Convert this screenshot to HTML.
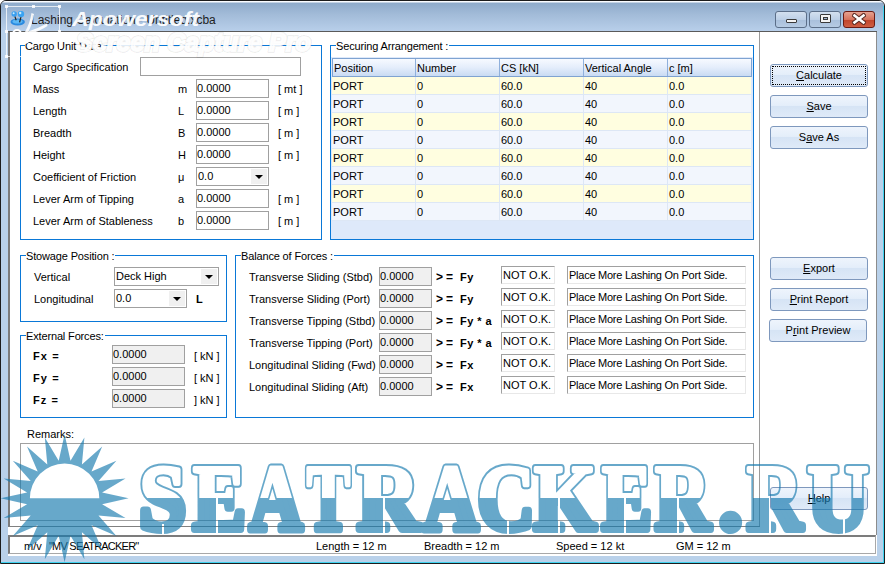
<!DOCTYPE html>
<html><head><meta charset="utf-8">
<style>
*{margin:0;padding:0;box-sizing:border-box}
html,body{width:885px;height:564px;overflow:hidden;background:#fff}
body{position:relative;font-family:"Liberation Sans",sans-serif;font-size:11px;color:#000}
div,span{position:absolute}
.t{white-space:nowrap;line-height:13px;font-size:11px}
.b{font-weight:bold;letter-spacing:0.45px}
.tb{border:1px solid #a0a0a0;background:#fff;height:19px;width:73px}
.tb span{left:0px;top:2px;line-height:13px;white-space:nowrap}
.g{background:#f0f0f0}
.gb{border:1px solid #0a78d7}
.gl{background:#fff;line-height:13px;white-space:nowrap;padding:0 1px 0 0;letter-spacing:-0.15px}
.sk{border-top:1px solid #a0a0a0;border-left:1px solid #a0a0a0;border-right:1px solid #e8e8e8;border-bottom:1px solid #e8e8e8;background:#fff;height:18px}
.sk span{left:1px;top:2px;line-height:13px;white-space:nowrap}
.btn{width:98px;height:23px;border:1px solid #7e98bd;border-radius:3px;background:linear-gradient(#eef4fc 0%,#e4eefa 45%,#d6e4f5 50%,#dfeaf8 100%);text-align:center;line-height:20px;font-size:11px}
.btn u{text-decoration:underline}
.cb{border:1px solid #a0a0a0;background:#fff;height:19px}
.cb span{left:1px;top:2px;line-height:13px}
.cb i{position:absolute;right:1px;top:1px;width:16px;height:15px;background:#f0f0f0}
.cb i:after{content:"";position:absolute;left:4px;top:6px;border-left:4px solid transparent;border-right:4px solid transparent;border-top:4px solid #000}
.row{height:18px;width:419px;left:0}
.row span{top:4px;line-height:13px}
.y{background:#fffee0}
.lb{background:#f2f6fd}
</style></head><body>
<!-- window frame -->
<div style="left:0;top:0;width:885px;height:564px;background:#b9d1ea;border:1px solid #1c1c1c;border-radius:6px 6px 0 0"></div>
<div style="left:1px;top:1px;width:883px;height:30px;border-radius:5px 5px 0 0;background:linear-gradient(#fafcff 0px,#fafcff 1px,#8fabcb 2px,#a3bcd9 14px,#b8cfea 30px)"></div>
<div style="left:883px;top:6px;width:1px;height:557px;background:#3fd3f0"></div>
<div style="left:1px;top:562px;width:883px;height:1px;background:#3fd3f0"></div>
<!-- title -->
<svg style="position:absolute;left:10px;top:11px" width="17" height="16" viewBox="0 0 17 16">
<ellipse cx="7.7" cy="11" rx="7.2" ry="3.4" fill="#2a8ae0"/>
<ellipse cx="7.5" cy="10.6" rx="5" ry="2" fill="#5cb8f5"/>
<line x1="4.8" y1="5.2" x2="6.2" y2="9.2" stroke="#222" stroke-width="1.1"/>
<line x1="11" y1="5.6" x2="9.6" y2="11.4" stroke="#222" stroke-width="1.2"/>
<circle cx="4.2" cy="3" r="2.7" fill="#3a9ff0"/><circle cx="11" cy="3" r="3.2" fill="#3aa3f2"/>
<circle cx="3.6" cy="2.2" r="1" fill="#c8ecff"/><circle cx="10.2" cy="2" r="1.2" fill="#c8ecff"/>
</svg>
<div class="t" style="left:31px;top:13px;font-size:12px;line-height:14px;color:#1e1e1e">Lashing Calculation - Untitled.xcba</div>
<!-- caption buttons -->
<div style="left:775px;top:11px;width:32px;height:17px;border:1px solid #5b6e88;border-radius:3px;background:linear-gradient(#d3e0ef 0%,#bccfe6 50%,#a8bfdb 51%,#b6cbe3 100%)"><span style="left:10px;top:7px;width:11px;height:4px;background:#f4f4f4;border:1px solid #3a3a3a;border-radius:1px"></span></div>
<div style="left:809px;top:11px;width:32px;height:17px;border:1px solid #5b6e88;border-radius:3px;background:linear-gradient(#d3e0ef 0%,#bccfe6 50%,#a8bfdb 51%,#b6cbe3 100%)"><span style="left:10px;top:2px;width:11px;height:9px;background:#f4f4f4;border:1px solid #3a3a3a;border-radius:1px"><span style="left:2px;top:2px;width:5px;height:3px;border:1px solid #3a3a3a;background:#9fb4cf"></span></span></div>
<div style="left:843px;top:11px;width:32px;height:17px;border:1px solid #6a1a12;border-radius:3px;background:linear-gradient(#e6a291 0%,#d6735d 50%,#c0432a 51%,#cf5e42 100%)">
<svg style="position:absolute;left:8px;top:1px" width="14" height="12" viewBox="0 0 14 12"><path d="M2.5 2.5 L11.5 9.5 M11.5 2.5 L2.5 9.5" stroke="#5a2a22" stroke-width="4.6" stroke-linecap="square" fill="none"/><path d="M2.5 2.5 L11.5 9.5 M11.5 2.5 L2.5 9.5" stroke="#fff" stroke-width="2.6" stroke-linecap="square"/></svg></div>

<!-- client -->
<div style="left:8px;top:31px;width:869px;height:525px;background:#fff;border-top:1px solid #5a5a5a"></div>
<div style="left:8px;top:32px;width:2px;height:495px;background:#7c7c7c"></div>
<div style="left:876px;top:32px;width:1px;height:503px;background:#8c8c8c"></div>
<div style="left:759px;top:32px;width:1px;height:495px;background:#9a9a9a"></div>
<div style="left:8px;top:526px;width:752px;height:1px;background:#808080"></div>

<!-- Cargo Unit Data -->
<div class="gb" style="left:20px;top:45px;width:302px;height:195px"></div>
<div class="t gl" style="left:25px;top:40px">Cargo Unit Data</div>
<div class="t" style="left:33px;top:61px">Cargo Specification</div>
<div class="tb" style="left:140px;top:57px;width:161px"></div>
<div class="t" style="left:33px;top:83px">Mass</div><div class="t" style="left:178px;top:83px">m</div>
<div class="tb" style="left:196px;top:79px"><span>0.0000</span></div><div class="t" style="left:278px;top:83px">[ mt ]</div>
<div class="t" style="left:33px;top:105px">Length</div><div class="t" style="left:178px;top:105px">L</div>
<div class="tb" style="left:196px;top:101px"><span>0.0000</span></div><div class="t" style="left:278px;top:105px">[ m ]</div>
<div class="t" style="left:33px;top:127px">Breadth</div><div class="t" style="left:178px;top:127px">B</div>
<div class="tb" style="left:196px;top:123px"><span>0.0000</span></div><div class="t" style="left:278px;top:127px">[ m ]</div>
<div class="t" style="left:33px;top:149px">Height</div><div class="t" style="left:178px;top:149px">H</div>
<div class="tb" style="left:196px;top:145px"><span>0.0000</span></div><div class="t" style="left:278px;top:149px">[ m ]</div>
<div class="t" style="left:33px;top:171px">Coefficient of Friction</div><div class="t" style="left:178px;top:171px">μ</div>
<div class="cb" style="left:196px;top:167px;width:73px"><span>0.0</span><i></i></div>
<div class="t" style="left:33px;top:193px">Lever Arm of Tipping</div><div class="t" style="left:178px;top:193px">a</div>
<div class="tb" style="left:196px;top:189px"><span>0.0000</span></div><div class="t" style="left:278px;top:193px">[ m ]</div>
<div class="t" style="left:33px;top:215px">Lever Arm of Stableness</div><div class="t" style="left:178px;top:215px">b</div>
<div class="tb" style="left:196px;top:211px"><span>0.0000</span></div><div class="t" style="left:278px;top:215px">[ m ]</div>

<!-- Securing Arrangement -->
<div class="gb" style="left:330px;top:45px;width:424px;height:195px"></div>
<div class="t gl" style="left:336px;top:40px">Securing Arrangement :</div>
<div style="left:331px;top:57px;width:422px;height:182px;background:#dee9fa">
 <div style="left:1px;top:1px;width:420px;height:19px;border:1px solid #7fa3d1;background:linear-gradient(#f7faff 0%,#e4edfb 50%,#c9dbf3 100%)">
  <span class="t" style="left:1px;top:3px">Position</span>
  <span style="left:82px;top:0;width:1px;height:17px;background:#8fb0dc"></span>
  <span class="t" style="left:84px;top:3px">Number</span>
  <span style="left:166px;top:0;width:1px;height:17px;background:#8fb0dc"></span>
  <span class="t" style="left:168px;top:3px">CS [kN]</span>
  <span style="left:250px;top:0;width:1px;height:17px;background:#8fb0dc"></span>
  <span class="t" style="left:252px;top:3px">Vertical Angle</span>
  <span style="left:334px;top:0;width:1px;height:17px;background:#8fb0dc"></span>
  <span class="t" style="left:336px;top:3px">c [m]</span>
 </div>
 <div style="left:1px;top:20px;width:420px;height:144px" id="rows"><div class="row y" style="top:0px;border-bottom:1px solid #dde7f5"><span class="t" style="left:1px;top:3px">PORT</span><span class="t" style="left:85px;top:3px">0</span><span class="t" style="left:169px;top:3px">60.0</span><span class="t" style="left:253px;top:3px">40</span><span class="t" style="left:337px;top:3px">0.0</span><span style="left:83px;top:0;width:1px;height:17px;background:#dde7f5"></span><span style="left:167px;top:0;width:1px;height:17px;background:#dde7f5"></span><span style="left:251px;top:0;width:1px;height:17px;background:#dde7f5"></span><span style="left:335px;top:0;width:1px;height:17px;background:#dde7f5"></span></div><div class="row lb" style="top:18px;border-bottom:1px solid #dde7f5"><span class="t" style="left:1px;top:3px">PORT</span><span class="t" style="left:85px;top:3px">0</span><span class="t" style="left:169px;top:3px">60.0</span><span class="t" style="left:253px;top:3px">40</span><span class="t" style="left:337px;top:3px">0.0</span><span style="left:83px;top:0;width:1px;height:17px;background:#dde7f5"></span><span style="left:167px;top:0;width:1px;height:17px;background:#dde7f5"></span><span style="left:251px;top:0;width:1px;height:17px;background:#dde7f5"></span><span style="left:335px;top:0;width:1px;height:17px;background:#dde7f5"></span></div><div class="row y" style="top:36px;border-bottom:1px solid #dde7f5"><span class="t" style="left:1px;top:3px">PORT</span><span class="t" style="left:85px;top:3px">0</span><span class="t" style="left:169px;top:3px">60.0</span><span class="t" style="left:253px;top:3px">40</span><span class="t" style="left:337px;top:3px">0.0</span><span style="left:83px;top:0;width:1px;height:17px;background:#dde7f5"></span><span style="left:167px;top:0;width:1px;height:17px;background:#dde7f5"></span><span style="left:251px;top:0;width:1px;height:17px;background:#dde7f5"></span><span style="left:335px;top:0;width:1px;height:17px;background:#dde7f5"></span></div><div class="row lb" style="top:54px;border-bottom:1px solid #dde7f5"><span class="t" style="left:1px;top:3px">PORT</span><span class="t" style="left:85px;top:3px">0</span><span class="t" style="left:169px;top:3px">60.0</span><span class="t" style="left:253px;top:3px">40</span><span class="t" style="left:337px;top:3px">0.0</span><span style="left:83px;top:0;width:1px;height:17px;background:#dde7f5"></span><span style="left:167px;top:0;width:1px;height:17px;background:#dde7f5"></span><span style="left:251px;top:0;width:1px;height:17px;background:#dde7f5"></span><span style="left:335px;top:0;width:1px;height:17px;background:#dde7f5"></span></div><div class="row y" style="top:72px;border-bottom:1px solid #dde7f5"><span class="t" style="left:1px;top:3px">PORT</span><span class="t" style="left:85px;top:3px">0</span><span class="t" style="left:169px;top:3px">60.0</span><span class="t" style="left:253px;top:3px">40</span><span class="t" style="left:337px;top:3px">0.0</span><span style="left:83px;top:0;width:1px;height:17px;background:#dde7f5"></span><span style="left:167px;top:0;width:1px;height:17px;background:#dde7f5"></span><span style="left:251px;top:0;width:1px;height:17px;background:#dde7f5"></span><span style="left:335px;top:0;width:1px;height:17px;background:#dde7f5"></span></div><div class="row lb" style="top:90px;border-bottom:1px solid #dde7f5"><span class="t" style="left:1px;top:3px">PORT</span><span class="t" style="left:85px;top:3px">0</span><span class="t" style="left:169px;top:3px">60.0</span><span class="t" style="left:253px;top:3px">40</span><span class="t" style="left:337px;top:3px">0.0</span><span style="left:83px;top:0;width:1px;height:17px;background:#dde7f5"></span><span style="left:167px;top:0;width:1px;height:17px;background:#dde7f5"></span><span style="left:251px;top:0;width:1px;height:17px;background:#dde7f5"></span><span style="left:335px;top:0;width:1px;height:17px;background:#dde7f5"></span></div><div class="row y" style="top:108px;border-bottom:1px solid #dde7f5"><span class="t" style="left:1px;top:3px">PORT</span><span class="t" style="left:85px;top:3px">0</span><span class="t" style="left:169px;top:3px">60.0</span><span class="t" style="left:253px;top:3px">40</span><span class="t" style="left:337px;top:3px">0.0</span><span style="left:83px;top:0;width:1px;height:17px;background:#dde7f5"></span><span style="left:167px;top:0;width:1px;height:17px;background:#dde7f5"></span><span style="left:251px;top:0;width:1px;height:17px;background:#dde7f5"></span><span style="left:335px;top:0;width:1px;height:17px;background:#dde7f5"></span></div><div class="row lb" style="top:126px;border-bottom:1px solid #dde7f5"><span class="t" style="left:1px;top:3px">PORT</span><span class="t" style="left:85px;top:3px">0</span><span class="t" style="left:169px;top:3px">60.0</span><span class="t" style="left:253px;top:3px">40</span><span class="t" style="left:337px;top:3px">0.0</span><span style="left:83px;top:0;width:1px;height:17px;background:#dde7f5"></span><span style="left:167px;top:0;width:1px;height:17px;background:#dde7f5"></span><span style="left:251px;top:0;width:1px;height:17px;background:#dde7f5"></span><span style="left:335px;top:0;width:1px;height:17px;background:#dde7f5"></span></div></div>
</div>

<!-- right buttons -->
<div class="btn" style="left:770px;top:64px"><span style="left:1px;top:1px;right:1px;bottom:1px;border:1px dotted #000"></span><u>C</u>alculate</div>
<div class="btn" style="left:770px;top:95px"><u>S</u>ave</div>
<div class="btn" style="left:770px;top:126px">S<u>a</u>ve As</div>
<div class="btn" style="left:770px;top:257px"><u>E</u>xport</div>
<div class="btn" style="left:770px;top:288px"><u>P</u>rint Report</div>
<div class="btn" style="left:769px;top:319px">P<u>r</u>int Preview</div>
<div class="btn" style="left:770px;top:487px"><u>H</u>elp</div>

<!-- Stowage -->
<div class="gb" style="left:20px;top:255px;width:207px;height:67px"></div>
<div class="t gl" style="left:26px;top:250px">Stowage Position :</div>
<div class="t" style="left:34px;top:271px">Vertical</div>
<div class="cb" style="left:114px;top:267px;width:105px"><span>Deck High</span><i></i></div>
<div class="t" style="left:34px;top:293px">Longitudinal</div>
<div class="cb" style="left:114px;top:289px;width:73px"><span>0.0</span><i></i></div>
<div class="t b" style="left:196px;top:293px">L</div>

<!-- External Forces -->
<div class="gb" style="left:20px;top:335px;width:207px;height:83px"></div>
<div class="t gl" style="left:26px;top:330px">External Forces:</div>
<div class="t b" style="left:33px;top:350px;letter-spacing:1.1px">Fx =</div>
<div class="tb g" style="left:112px;top:345px"><span>0.0000</span></div><div class="t" style="left:194px;top:350px">[ kN ]</div>
<div class="t b" style="left:33px;top:372px;letter-spacing:1.1px">Fy =</div>
<div class="tb g" style="left:112px;top:367px"><span>0.0000</span></div><div class="t" style="left:194px;top:372px">[ kN ]</div>
<div class="t b" style="left:33px;top:394px;letter-spacing:1.1px">Fz =</div>
<div class="tb g" style="left:112px;top:389px"><span>0.0000</span></div><div class="t" style="left:194px;top:394px">] kN ]</div>

<!-- Balance of Forces -->
<div class="gb" style="left:235px;top:255px;width:519px;height:163px"></div>
<div class="t gl" style="left:241px;top:250px">Balance of Forces :</div>
<div class="t" style="left:249px;top:271px">Transverse Sliding (Stbd)</div><div class="tb g" style="left:379px;top:267px;width:53px"><span>0.0000</span></div><div class="t b" style="left:436px;top:271px;letter-spacing:3px;font-size:12px">&gt;=</div><div class="t b" style="left:460px;top:271px">Fy</div><div class="sk" style="left:501px;top:266px;width:54px"><span>NOT O.K.</span></div><div class="sk" style="left:567px;top:266px;width:179px"><span style="letter-spacing:-0.25px">Place More Lashing On Port Side.</span></div><div class="t" style="left:249px;top:293px">Transverse Sliding (Port)</div><div class="tb g" style="left:379px;top:289px;width:53px"><span>0.0000</span></div><div class="t b" style="left:436px;top:293px;letter-spacing:3px;font-size:12px">&gt;=</div><div class="t b" style="left:460px;top:293px">Fy</div><div class="sk" style="left:501px;top:288px;width:54px"><span>NOT O.K.</span></div><div class="sk" style="left:567px;top:288px;width:179px"><span style="letter-spacing:-0.25px">Place More Lashing On Port Side.</span></div><div class="t" style="left:249px;top:315px">Transverse Tipping (Stbd)</div><div class="tb g" style="left:379px;top:311px;width:53px"><span>0.0000</span></div><div class="t b" style="left:436px;top:315px;letter-spacing:3px;font-size:12px">&gt;=</div><div class="t b" style="left:460px;top:315px">Fy * a</div><div class="sk" style="left:501px;top:310px;width:54px"><span>NOT O.K.</span></div><div class="sk" style="left:567px;top:310px;width:179px"><span style="letter-spacing:-0.25px">Place More Lashing On Port Side.</span></div><div class="t" style="left:249px;top:337px">Transverse Tipping (Port)</div><div class="tb g" style="left:379px;top:333px;width:53px"><span>0.0000</span></div><div class="t b" style="left:436px;top:337px;letter-spacing:3px;font-size:12px">&gt;=</div><div class="t b" style="left:460px;top:337px">Fy * a</div><div class="sk" style="left:501px;top:332px;width:54px"><span>NOT O.K.</span></div><div class="sk" style="left:567px;top:332px;width:179px"><span style="letter-spacing:-0.25px">Place More Lashing On Port Side.</span></div><div class="t" style="left:249px;top:359px">Longitudinal Sliding (Fwd)</div><div class="tb g" style="left:379px;top:355px;width:53px"><span>0.0000</span></div><div class="t b" style="left:436px;top:359px;letter-spacing:3px;font-size:12px">&gt;=</div><div class="t b" style="left:460px;top:359px">Fx</div><div class="sk" style="left:501px;top:354px;width:54px"><span>NOT O.K.</span></div><div class="sk" style="left:567px;top:354px;width:179px"><span style="letter-spacing:-0.25px">Place More Lashing On Port Side.</span></div><div class="t" style="left:249px;top:381px">Longitudinal Sliding (Aft)</div><div class="tb g" style="left:379px;top:377px;width:53px"><span>0.0000</span></div><div class="t b" style="left:436px;top:381px;letter-spacing:3px;font-size:12px">&gt;=</div><div class="t b" style="left:460px;top:381px">Fx</div><div class="sk" style="left:501px;top:376px;width:54px"><span>NOT O.K.</span></div><div class="sk" style="left:567px;top:376px;width:179px"><span style="letter-spacing:-0.25px">Place More Lashing On Port Side.</span></div>

<!-- Remarks -->
<div class="t" style="left:27px;top:428px">Remarks:</div>
<div style="left:20px;top:443px;width:734px;height:78px;border:1px solid #a0a0a0"></div>

<!-- status bar -->
<div style="left:8px;top:535px;width:868px;height:19px;border-top:2px solid #7c7c7c;border-left:2px solid #7c7c7c;border-right:1px solid #a8a8a8;border-bottom:1px solid #a8a8a8;background:#fff"></div>
<div class="t" style="left:24px;top:540px">m/v</div>
<div class="t" style="left:49px;top:540px;letter-spacing:-0.78px">"MV SEATRACKER"</div>
<div class="t" style="left:316px;top:540px">Length = 12 m</div>
<div class="t" style="left:424px;top:540px">Breadth = 12 m</div>
<div class="t" style="left:556px;top:540px">Speed = 12 kt</div>
<div class="t" style="left:676px;top:540px">GM = 12 m</div>

<!-- watermark -->
<svg style="position:absolute;left:0;top:0" width="885" height="564">
<defs>
<clipPath id="up"><rect x="0" y="0" width="885" height="498"/></clipPath>
<clipPath id="dn"><rect x="0" y="498" width="885" height="70"/></clipPath>
<mask id="ring" maskUnits="userSpaceOnUse" x="0" y="0" width="885" height="564"><g font-family="Liberation Serif" font-weight="bold" font-size="92.2"><text transform="translate(139.19,528.8) scale(0.9125,1)" fill="#fff" stroke="#fff" stroke-width="8.0" stroke-linejoin="round">S</text><text transform="translate(193.08,528.8) scale(0.8553,1)" fill="#fff" stroke="#fff" stroke-width="8.0" stroke-linejoin="round">E</text><text transform="translate(249.45,528.8) scale(0.7955,1)" fill="#fff" stroke="#fff" stroke-width="8.0" stroke-linejoin="round">A</text><text transform="translate(306.78,528.8) scale(0.7063,1)" fill="#fff" stroke="#fff" stroke-width="8.0" stroke-linejoin="round">T</text><text transform="translate(357.28,528.8) scale(0.9357,1)" fill="#fff" stroke="#fff" stroke-width="8.0" stroke-linejoin="round">R</text><text transform="translate(423.53,528.8) scale(0.8229,1)" fill="#fff" stroke="#fff" stroke-width="8.0" stroke-linejoin="round">A</text><text transform="translate(477.56,528.8) scale(0.8578,1)" fill="#fff" stroke="#fff" stroke-width="8.0" stroke-linejoin="round">C</text><text transform="translate(534.11,528.8) scale(0.8664,1)" fill="#fff" stroke="#fff" stroke-width="8.0" stroke-linejoin="round">K</text><text transform="translate(601.97,528.8) scale(0.8078,1)" fill="#fff" stroke="#fff" stroke-width="8.0" stroke-linejoin="round">E</text><text transform="translate(655.01,528.8) scale(0.8272,1)" fill="#fff" stroke="#fff" stroke-width="8.0" stroke-linejoin="round">R</text><text transform="translate(718.94,528.8) scale(1.0068,1)" fill="#fff" stroke="#fff" stroke-width="8.0" stroke-linejoin="round">.</text><text transform="translate(747.01,528.8) scale(0.8272,1)" fill="#fff" stroke="#fff" stroke-width="8.0" stroke-linejoin="round">R</text><text transform="translate(807.55,528.8) scale(0.9160,1)" fill="#fff" stroke="#fff" stroke-width="8.0" stroke-linejoin="round">U</text><text transform="translate(139.19,528.8) scale(0.9125,1)" fill="#000" stroke="#000" stroke-width="4.0" stroke-linejoin="round">S</text><text transform="translate(193.08,528.8) scale(0.8553,1)" fill="#000" stroke="#000" stroke-width="4.0" stroke-linejoin="round">E</text><text transform="translate(249.45,528.8) scale(0.7955,1)" fill="#000" stroke="#000" stroke-width="4.0" stroke-linejoin="round">A</text><text transform="translate(306.78,528.8) scale(0.7063,1)" fill="#000" stroke="#000" stroke-width="4.0" stroke-linejoin="round">T</text><text transform="translate(357.28,528.8) scale(0.9357,1)" fill="#000" stroke="#000" stroke-width="4.0" stroke-linejoin="round">R</text><text transform="translate(423.53,528.8) scale(0.8229,1)" fill="#000" stroke="#000" stroke-width="4.0" stroke-linejoin="round">A</text><text transform="translate(477.56,528.8) scale(0.8578,1)" fill="#000" stroke="#000" stroke-width="4.0" stroke-linejoin="round">C</text><text transform="translate(534.11,528.8) scale(0.8664,1)" fill="#000" stroke="#000" stroke-width="4.0" stroke-linejoin="round">K</text><text transform="translate(601.97,528.8) scale(0.8078,1)" fill="#000" stroke="#000" stroke-width="4.0" stroke-linejoin="round">E</text><text transform="translate(655.01,528.8) scale(0.8272,1)" fill="#000" stroke="#000" stroke-width="4.0" stroke-linejoin="round">R</text><text transform="translate(718.94,528.8) scale(1.0068,1)" fill="#000" stroke="#000" stroke-width="4.0" stroke-linejoin="round">.</text><text transform="translate(747.01,528.8) scale(0.8272,1)" fill="#000" stroke="#000" stroke-width="4.0" stroke-linejoin="round">R</text><text transform="translate(807.55,528.8) scale(0.9160,1)" fill="#000" stroke="#000" stroke-width="4.0" stroke-linejoin="round">U</text></g></mask><mask id="gaps" maskUnits="userSpaceOnUse" x="0" y="0" width="885" height="564"><rect width="885" height="564" fill="#fff"/><rect x="162" y="524" width="2" height="12" fill="#000"/><rect x="216" y="497" width="2" height="40" fill="#000"/><rect x="383" y="497" width="2" height="40" fill="#000"/><rect x="507" y="520" width="2" height="16" fill="#000"/><rect x="558" y="497" width="2" height="40" fill="#000"/><rect x="624" y="497" width="2" height="40" fill="#000"/><rect x="677" y="497" width="2" height="40" fill="#000"/><rect x="769" y="497" width="2" height="40" fill="#000"/><rect x="843" y="514" width="2" height="22" fill="#000"/></mask></defs>
<g fill="none" stroke="#fff" stroke-opacity="0.75"><rect x="6.5" y="6.5" width="53" height="50"/></g>
<g fill="#fff" fill-opacity="0.85"><rect x="5" y="5" width="3" height="3"/><rect x="32" y="5" width="3" height="3"/><rect x="58" y="5" width="3" height="3"/><rect x="5" y="30" width="3" height="3"/><rect x="58" y="30" width="3" height="3"/><rect x="5" y="55" width="3" height="3"/><rect x="32" y="55" width="3" height="3"/><rect x="58" y="55" width="3" height="3"/></g>
<g fill="#fff" fill-opacity="0.9"><path d="M31.5 13 Q30 23 25 32 L28 32.5 Q32.5 24 34 14 Z"/><path d="M47 23.5 Q38 28.5 28 31.5 L29.5 34 Q40 31 47.5 26 Z"/><circle cx="17" cy="34" r="4" fill="none" stroke="#fff" stroke-width="2"/><circle cx="25" cy="39" r="4" fill="none" stroke="#fff" stroke-width="2"/></g>
<text x="72" y="25.5" font-family="Liberation Sans" font-weight="bold" font-style="italic" font-size="19.5" textLength="127" lengthAdjust="spacingAndGlyphs" fill="#fff" fill-opacity="0.95">Apowersoft</text>
<text x="76" y="50.5" font-family="Liberation Sans" font-weight="bold" font-style="italic" font-size="25" textLength="235" lengthAdjust="spacingAndGlyphs" fill="none" stroke="#000" stroke-opacity="0.09" stroke-width="3.5">Screen Capture Pro</text>
<text x="76" y="50.5" font-family="Liberation Sans" font-weight="bold" font-style="italic" font-size="25" textLength="235" lengthAdjust="spacingAndGlyphs" fill="#fff" fill-opacity="0.92" stroke="#fff" stroke-opacity="0.9" stroke-width="2">Screen Capture Pro</text>
<g opacity="0.65">
<path id="sun" fill="#167aaf" fill-rule="evenodd" d="M64.6 434.3 L70.5 460.8 L84.4 437.4 L81.9 464.4 L102.2 446.5 L91.5 471.4 L116.4 460.7 L98.5 481.0 L125.5 478.5 L102.1 492.4 L128.6 498.3 L102.1 504.2 L125.5 518.1 L98.5 515.6 L116.4 535.9 L91.5 525.2 L102.2 550.1 L81.9 532.2 L84.4 559.2 L70.5 535.8 L64.6 562.3 L58.7 535.8 L44.8 559.2 L47.3 532.2 L27.0 550.1 L37.7 525.2 L12.8 535.9 L30.7 515.6 L3.7 518.1 L27.1 504.2 L0.6 498.3 L27.1 492.4 L3.7 478.5 L30.7 481.0 L12.8 460.7 L37.7 471.4 L27.0 446.5 L47.3 464.4 L44.8 437.4 L58.7 460.8 Z M29.9 498.3 A34.7 34.7 0 0 1 99.3 498.3 Z"/>
<g mask="url(#gaps)"><g clip-path="url(#dn)" font-family="Liberation Serif" font-weight="bold" font-size="92.2"><text transform="translate(139.19,528.8) scale(0.9125,1)" fill="#167aaf" stroke="#167aaf" stroke-width="8.0" stroke-linejoin="round">S</text><text transform="translate(193.08,528.8) scale(0.8553,1)" fill="#167aaf" stroke="#167aaf" stroke-width="8.0" stroke-linejoin="round">E</text><text transform="translate(249.45,528.8) scale(0.7955,1)" fill="#167aaf" stroke="#167aaf" stroke-width="8.0" stroke-linejoin="round">A</text><text transform="translate(306.78,528.8) scale(0.7063,1)" fill="#167aaf" stroke="#167aaf" stroke-width="8.0" stroke-linejoin="round">T</text><text transform="translate(357.28,528.8) scale(0.9357,1)" fill="#167aaf" stroke="#167aaf" stroke-width="8.0" stroke-linejoin="round">R</text><text transform="translate(423.53,528.8) scale(0.8229,1)" fill="#167aaf" stroke="#167aaf" stroke-width="8.0" stroke-linejoin="round">A</text><text transform="translate(477.56,528.8) scale(0.8578,1)" fill="#167aaf" stroke="#167aaf" stroke-width="8.0" stroke-linejoin="round">C</text><text transform="translate(534.11,528.8) scale(0.8664,1)" fill="#167aaf" stroke="#167aaf" stroke-width="8.0" stroke-linejoin="round">K</text><text transform="translate(601.97,528.8) scale(0.8078,1)" fill="#167aaf" stroke="#167aaf" stroke-width="8.0" stroke-linejoin="round">E</text><text transform="translate(655.01,528.8) scale(0.8272,1)" fill="#167aaf" stroke="#167aaf" stroke-width="8.0" stroke-linejoin="round">R</text><text transform="translate(718.94,528.8) scale(1.0068,1)" fill="#167aaf" stroke="#167aaf" stroke-width="8.0" stroke-linejoin="round">.</text><text transform="translate(747.01,528.8) scale(0.8272,1)" fill="#167aaf" stroke="#167aaf" stroke-width="8.0" stroke-linejoin="round">R</text><text transform="translate(807.55,528.8) scale(0.9160,1)" fill="#167aaf" stroke="#167aaf" stroke-width="8.0" stroke-linejoin="round">U</text></g></g><g clip-path="url(#up)"><rect x="0" y="0" width="885" height="564" fill="#167aaf" mask="url(#ring)"/></g>
</g>
</svg>
</body></html>
